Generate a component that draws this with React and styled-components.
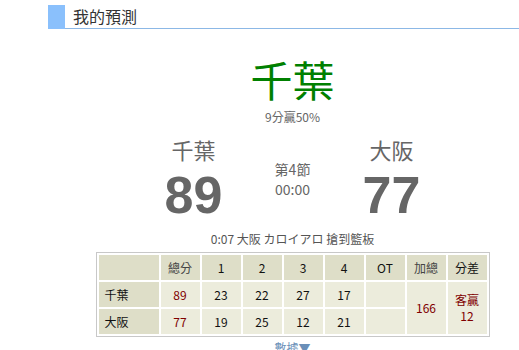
import React from "react";
import styled, { createGlobalStyle } from "styled-components";

const Global = createGlobalStyle`
  html, body { margin: 0; padding: 0; background: #fff; overflow: hidden; }
  body { font-family: "Noto Sans CJK TC", "Noto Sans", sans-serif; }
`;

const Page = styled.div`
  margin-left: 48px;
  width: 489px;
  padding-top: 5px;
`;

const Header = styled.div`
  display: flex;
  align-items: stretch;
  height: 24px;
`;

const Mark = styled.div`
  width: 17px;
  background: #8ac0fc;
`;

const Title = styled.div`
  flex: 1;
  border-bottom: 1px solid #8cb8e6;
  padding-left: 8px;
  font-size: 16px;
  line-height: 22px;
  color: #333;
`;

const Pick = styled.div`
  text-align: center;
  color: #008000;
  font-size: 42px;
  line-height: 44px;
  margin-top: 28px;
`;

const Sub = styled.div`
  text-align: center;
  color: #666;
  font-size: 12px;
  line-height: 16px;
  margin-top: 8px;
`;

const Board = styled.div`
  display: flex;
  justify-content: center;
  align-items: flex-start;
  margin-top: 9px;
`;

const Team = styled.div`
  width: 90px;
  display: flex;
  flex-direction: column;
  align-items: center;
`;

const TeamName = styled.div`
  font-size: 22px;
  line-height: 30px;
  color: #666;
`;

const Score = styled.div`
  font-family: "Liberation Sans", Arial, sans-serif;
  font-weight: bold;
  font-size: 52px;
  line-height: 56px;
  margin-top: 3px;
  color: #666;
`;

const Clock = styled.div`
  width: 108px;
  display: flex;
  flex-direction: column;
  align-items: center;
  padding-top: 25px;
  color: #666;
  font-size: 14px;
  line-height: 20px;
`;

const Play = styled.div`
  text-align: center;
  color: #555;
  font-size: 12px;
  line-height: 16px;
  margin-top: 8px;
`;

const TableWrap = styled.div`
  display: flex;
  justify-content: center;
  margin-top: 5px;
`;

const Table = styled.table`
  border: 1px solid #c8c8c8;
  border-collapse: separate;
  border-spacing: 2px;
  padding: 0;
  background: #fff;
  font-size: 12px;
`;

const Cell = styled.td`
  width: ${(p) => p.$w || 39}px;
  height: 25px;
  padding: 0;
  text-align: ${(p) => (p.$left ? "left" : "center")};
  padding-left: ${(p) => (p.$left ? "6px" : "0")};
  background: ${(p) => (p.$head ? "#dedec8" : "#ececdc")};
  color: ${(p) => (p.$red ? "#800000" : p.$gray ? "#444" : "#111")};
  line-height: 16px;
`;

const More = styled.div`
  text-align: center;
  color: #6a8fb8;
  font-size: 12px;
  line-height: 14px;
  margin-top: 4px;
`;

const rows = [
  { name: "千葉", total: 89, q: [23, 22, 27, 17] },
  { name: "大阪", total: 77, q: [19, 25, 12, 21] },
];

export default function App() {
  return (
    <Page>
      <Global />
      <Header>
        <Mark />
        <Title>我的預測</Title>
      </Header>
      <Pick>千葉</Pick>
      <Sub>9分贏50%</Sub>
      <Board>
        <Team>
          <TeamName>千葉</TeamName>
          <Score>89</Score>
        </Team>
        <Clock>
          <div>第4節</div>
          <div>00:00</div>
        </Clock>
        <Team>
          <TeamName>大阪</TeamName>
          <Score>77</Score>
        </Team>
      </Board>
      <Play>0:07 大阪 カロイアロ 搶到籃板</Play>
      <TableWrap>
        <Table>
          <tbody>
            <tr>
              <Cell $head $w={54} $left />
              <Cell $head $gray>總分</Cell>
              <Cell $head>1</Cell>
              <Cell $head>2</Cell>
              <Cell $head>3</Cell>
              <Cell $head>4</Cell>
              <Cell $head>OT</Cell>
              <Cell $head $gray>加總</Cell>
              <Cell $head>分差</Cell>
            </tr>
            {rows.map((r, i) => (
              <tr key={r.name}>
                <Cell $head $left>{r.name}</Cell>
                <Cell $red>{r.total}</Cell>
                {r.q.map((v, j) => (
                  <Cell key={j}>{v}</Cell>
                ))}
                <Cell />
                {i === 0 && (
                  <>
                    <Cell rowSpan={2} $red>166</Cell>
                    <Cell rowSpan={2} $red>客贏<br />12</Cell>
                  </>
                )}
              </tr>
            ))}
          </tbody>
        </Table>
      </TableWrap>
      <More>數據▼</More>
    </Page>
  );
}
